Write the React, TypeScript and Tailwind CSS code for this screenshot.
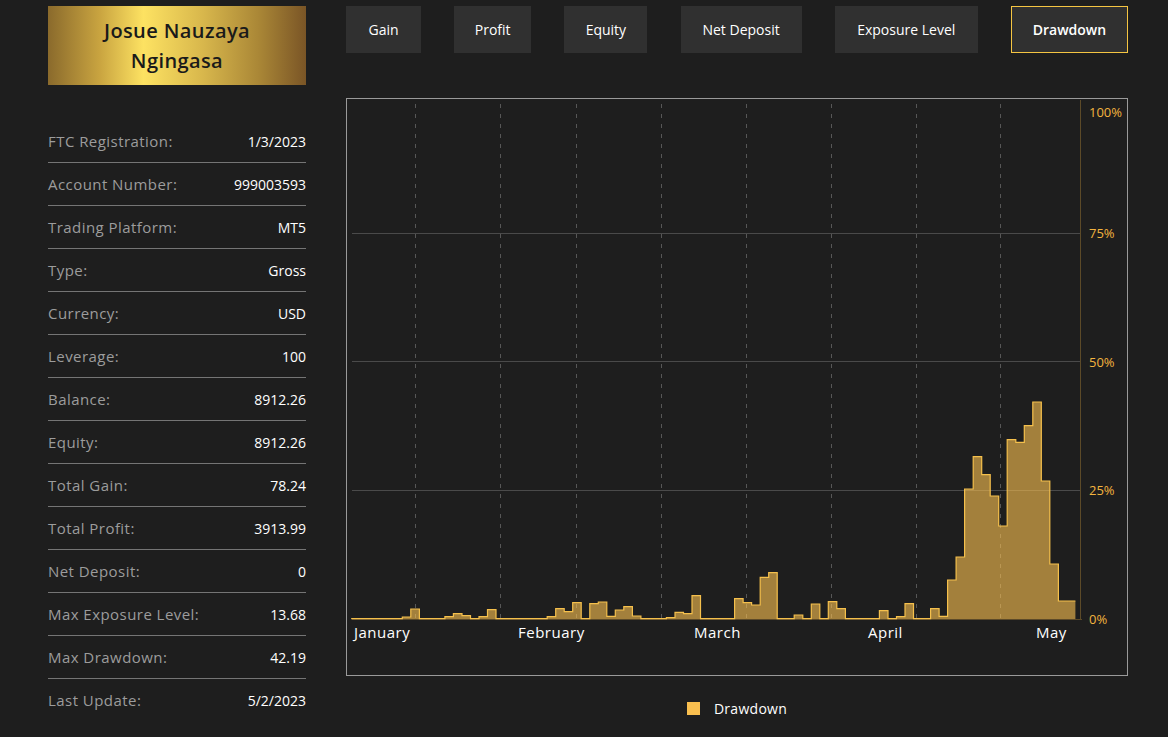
import React from 'react';

const tabs = [
  { name: 'Gain', w: 'w-[75px]' },
  { name: 'Profit', w: 'w-[77px]' },
  { name: 'Equity', w: 'w-[83px]' },
  { name: 'Net Deposit', w: 'w-[121px]' },
  { name: 'Exposure Level', w: 'w-[143px]' },
  { name: 'Drawdown', w: 'w-[117px]', active: true },
];

const details = [
  ['FTC Registration:', '1/3/2023'],
  ['Account Number:', '999003593'],
  ['Trading Platform:', 'MT5'],
  ['Type:', 'Gross'],
  ['Currency:', 'USD'],
  ['Leverage:', '100'],
  ['Balance:', '8912.26'],
  ['Equity:', '8912.26'],
  ['Total Gain:', '78.24'],
  ['Total Profit:', '3913.99'],
  ['Net Deposit:', '0'],
  ['Max Exposure Level:', '13.68'],
  ['Max Drawdown:', '42.19'],
  ['Last Update:', '5/2/2023'],
];

// bar heights in px above the baseline, one per trading day
const z = 0.4;
const heights = [
  z, z, z, z, z, z,
  2, 10, z, z, z, 2.3, 5.3, 3.3, z, 2.3, 9.3,
  z, z, z, z, z, z,
  2.3, 10.3, 7.3, 16.3, z, 15.3, 17, 2.7, 9, 12.3, 3,
  z, z, z,
  1.3, 6.7, 5.3, 23.3,
  z, z, z, z,
  20.3, 16.3, 14, 41.7, 46.3,
  z, z,
  4, z, 15, z, 17.3, 10.3,
  z, z, z, z,
  8.3, z, 2.3, 15.3,
  z, z,
  10.3, 2.7, 39, 62, 130, 162.3, 144.3, 123, 93, 179.3, 176.7, 193.3, 217, 138, 55, 18, 18,
];

const X0 = 351.2;
const STEP = 8.52;
const BASE = 619;

function DrawdownChart() {
  let line = '';
  heights.forEach((h, i) => {
    const x0 = X0 + i * STEP;
    const x1 = x0 + STEP;
    const y = BASE - h;
    line += `${i === 0 ? 'M' : 'L'}${x0.toFixed(1)} ${y.toFixed(1)} L${x1.toFixed(1)} ${y.toFixed(1)} `;
  });
  const endX = X0 + heights.length * STEP;
  const area = `M${X0} ${BASE} L${line.slice(1)} L${endX.toFixed(1)} ${BASE} Z`;

  const vlines = [415, 500, 576, 661, 746, 831, 916, 1000];
  const ylabels: [string, number][] = [
    ['100%', 112],
    ['75%', 233],
    ['50%', 362],
    ['25%', 490],
    ['0%', 619],
  ];
  const months: [string, number][] = [
    ['January', 354],
    ['February', 518],
    ['March', 694],
    ['April', 868],
    ['May', 1036],
  ];

  return (
    <svg width="780" height="576" className="block">
      <g transform="translate(-347,-99)">
        {[233.5, 361.5, 490.5].map((y) => (
          <line key={y} x1="352" x2="1080" y1={y} y2={y} stroke="#4a4a4a" strokeWidth="1" />
        ))}
        {vlines.map((x) => (
          <line
            key={x}
            x1={x + 0.5}
            x2={x + 0.5}
            y1="104"
            y2="619"
            stroke="#575757"
            strokeWidth="1"
            strokeDasharray="4 6"
          />
        ))}
        <line x1="352" x2="1082" y1="619.5" y2="619.5" stroke="#5c4a28" strokeWidth="1" />
        <line x1="1080.5" x2="1080.5" y1="100" y2="620" stroke="#5c4a28" strokeWidth="1" />
        <path d={area} fill="#fbc150" fillOpacity="0.6" />
        <path d={line} fill="none" stroke="#f5c04c" strokeWidth="1.2" />
        {ylabels.map(([t, y]) => (
          <text key={t} x="1089" y={y} dominantBaseline="central" fill="#f3b43f" fontSize="13">
            {t}
          </text>
        ))}
        {months.map(([t, x]) => (
          <text
            key={t}
            x={x}
            y="632"
            dominantBaseline="central"
            fill="#ffffff"
            fontSize="15"
            letterSpacing="0.5"
          >
            {t}
          </text>
        ))}
      </g>
    </svg>
  );
}

export default function App() {
  return (
    <div
      className="min-h-[737px] w-full bg-[#1e1e1e] text-white"
      style={{ fontFamily: '"Open Sans", "Noto Sans", sans-serif' }}
    >
      <div className="flex gap-[40px] pl-[48px] pt-[6px]">
        {/* Left column */}
        <div className="w-[258px] flex-shrink-0">
          <div className="h-[79px] flex items-center justify-center text-center bg-[linear-gradient(90deg,#8a6a2c_0%,#c9a440_20%,#fde262_37%,#d8b74c_60%,#a98636_82%,#7a5526_100%)]">
            <span className="text-[20px] leading-[30px] font-semibold tracking-[0.02em] text-[#1a1a1a]">
              Josue Nauzaya
              <br />
              Ngingasa
            </span>
          </div>
          <div className="mt-[35px]">
            {details.map(([label, value], i) => (
              <div
                key={label}
                className={`flex items-center justify-between h-[43px] ${
                  i < details.length - 1 ? 'border-b border-[#757575]' : ''
                }`}
              >
                <span className="text-[15px] tracking-[0.03em] text-[#9c9c9c]">{label}</span>
                <span className="text-[14px] text-white font-medium">{value}</span>
              </div>
            ))}
          </div>
        </div>

        {/* Right column */}
        <div className="w-[782px] flex-shrink-0">
          <div className="flex justify-between">
            {tabs.map((t) => (
              <div
                key={t.name}
                className={`${t.w} h-[47px] flex items-center justify-center bg-[#303030] text-[14px] ${
                  t.active ? 'border border-[#f5c542] font-semibold' : 'font-medium'
                }`}
              >
                {t.name}
              </div>
            ))}
          </div>
          <div className="mt-[45px] h-[578px] border border-[#9a9a9a]">
            <DrawdownChart />
          </div>
          <div className="mt-[22px] flex items-center justify-center gap-[14px]">
            <div className="w-[13px] h-[13px] bg-[#f9bf4f]" />
            <span className="text-[14px] font-medium tracking-[0.02em]">Drawdown</span>
          </div>
        </div>
      </div>
    </div>
  );
}
